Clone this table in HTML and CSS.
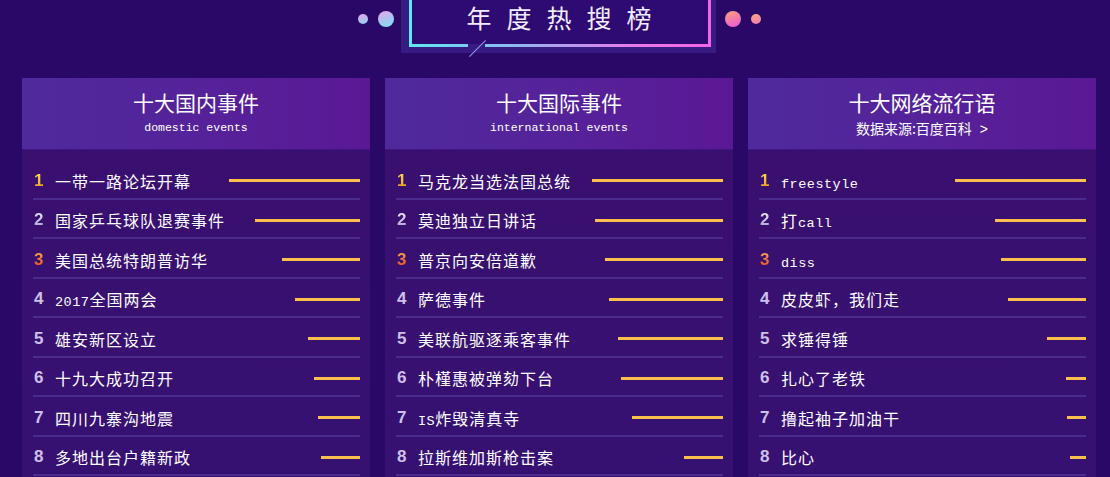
FILE: index.html
```html
<!DOCTYPE html>
<html lang="zh-CN">
<head>
  <meta charset="UTF-8" />
  <meta name="viewport" content="width=device-width, initial-scale=1.0" />
  <title>年度热搜榜</title>
  <link rel="stylesheet" href="styles.css">
</head>
<body>

  <div class="top">
    <div class="dots">
      <span class="dot small cool-small"></span>
      <span class="dot big cool"></span>
    </div>
    <div class="title-frame">
      <div class="title-border">
        <h1 class="title">年度热搜榜</h1>
      </div>
      <span class="notch"></span>
      <span class="notch-line"></span>
    </div>
    <div class="dots">
      <span class="dot big warm"></span>
      <span class="dot small warm-small"></span>
    </div>
  </div>

  <div class="boards">
    <div class="board">
      <div class="board-head">
        <h2>十大国内事件</h2>
        <p class="sub en-sub">domestic events</p>
      </div>
      <ul class="rank-list">
        <li><span class="no no1">1</span><span class="name">一带一路论坛开幕</span><span class="bar" style="width:131px"></span></li>
        <li><span class="no no2">2</span><span class="name">国家乒乓球队退赛事件</span><span class="bar" style="width:105px"></span></li>
        <li><span class="no no3">3</span><span class="name">美国总统特朗普访华</span><span class="bar" style="width:78px"></span></li>
        <li><span class="no">4</span><span class="name"><span class="en">2017</span>全国两会</span><span class="bar" style="width:65px"></span></li>
        <li><span class="no">5</span><span class="name">雄安新区设立</span><span class="bar" style="width:52px"></span></li>
        <li><span class="no">6</span><span class="name">十九大成功召开</span><span class="bar" style="width:46px"></span></li>
        <li><span class="no">7</span><span class="name">四川九寨沟地震</span><span class="bar" style="width:42px"></span></li>
        <li><span class="no">8</span><span class="name">多地出台户籍新政</span><span class="bar" style="width:39px"></span></li>
      </ul>
    </div>

    <div class="board">
      <div class="board-head">
        <h2>十大国际事件</h2>
        <p class="sub en-sub">international events</p>
      </div>
      <ul class="rank-list">
        <li><span class="no no1">1</span><span class="name">马克龙当选法国总统</span><span class="bar" style="width:131px"></span></li>
        <li><span class="no no2">2</span><span class="name">莫迪独立日讲话</span><span class="bar" style="width:128px"></span></li>
        <li><span class="no no3">3</span><span class="name">普京向安倍道歉</span><span class="bar" style="width:118px"></span></li>
        <li><span class="no">4</span><span class="name">萨德事件</span><span class="bar" style="width:114px"></span></li>
        <li><span class="no">5</span><span class="name">美联航驱逐乘客事件</span><span class="bar" style="width:105px"></span></li>
        <li><span class="no">6</span><span class="name">朴槿惠被弹劾下台</span><span class="bar" style="width:102px"></span></li>
        <li><span class="no">7</span><span class="name"><span class="en">IS</span>炸毁清真寺</span><span class="bar" style="width:91px"></span></li>
        <li><span class="no">8</span><span class="name">拉斯维加斯枪击案</span><span class="bar" style="width:39px"></span></li>
      </ul>
    </div>

    <div class="board">
      <div class="board-head">
        <h2>十大网络流行语</h2>
        <p class="sub">数据来源:百度百科<span class="more">&gt;</span></p>
      </div>
      <ul class="rank-list">
        <li><span class="no no1">1</span><span class="name"><span class="en">freestyle</span></span><span class="bar" style="width:131px"></span></li>
        <li><span class="no no2">2</span><span class="name">打<span class="en">call</span></span><span class="bar" style="width:91px"></span></li>
        <li><span class="no no3">3</span><span class="name"><span class="en">diss</span></span><span class="bar" style="width:85px"></span></li>
        <li><span class="no">4</span><span class="name">皮皮虾，我们走</span><span class="bar" style="width:78px"></span></li>
        <li><span class="no">5</span><span class="name">求锤得锤</span><span class="bar" style="width:39px"></span></li>
        <li><span class="no">6</span><span class="name">扎心了老铁</span><span class="bar" style="width:20px"></span></li>
        <li><span class="no">7</span><span class="name">撸起袖子加油干</span><span class="bar" style="width:19px"></span></li>
        <li><span class="no">8</span><span class="name">比心</span><span class="bar" style="width:16px"></span></li>
      </ul>
    </div>
  </div>

</body>
</html>
```

FILE: styles.css
```css
body {
  margin: 0;
  background: #2a0868;
  font-family: "Noto Sans CJK SC", "Noto Sans", sans-serif;
  color: #fff;
  overflow: hidden;
}

/* title area */

.top {
  height: 78px;
  display: flex;
  justify-content: center;
  align-items: flex-start;
  padding-left: 9px;
}

.dots {
  display: flex;
  align-items: center;
  gap: 10px;
  margin-top: 11px;
  height: 16px;
}

.dots:first-child {
  margin-right: 7px;
}

.dots:last-child {
  margin-left: 9px;
}

.dot {
  display: block;
  border-radius: 50%;
}

.dot.small {
  width: 10px;
  height: 10px;
}

.dot.big {
  width: 16px;
  height: 16px;
}

.cool-small {
  background: linear-gradient(160deg, #e7a0ec, #8fd4f2);
}

.cool {
  background: linear-gradient(160deg, #f0a4e6 0%, #a6c6f0 55%, #7de6f0 100%);
}

.warm {
  background: linear-gradient(160deg, #f7a578 0%, #f272b6 60%, #e85ad8 100%);
}

.warm-small {
  background: linear-gradient(160deg, #f9a882, #f27ab8);
}

.title-frame {
  position: relative;
  margin-top: -10px;
  padding: 0 5px 6px 8px;
  background: #371a82;
}

.title-border {
  width: 296px;
  padding: 0 3px 3px 3px;
  background: linear-gradient(90deg, #5ee8f2 0%, #8fb8f0 35%, #e87ae8 75%, #f463e6 100%);
}

.title {
  margin: 0;
  height: 54px;
  line-height: 54px;
  background: #2d0b73;
  text-align: center;
  font-size: 25px;
  font-weight: normal;
  letter-spacing: 15px;
  padding-left: 13px;
  color: #f2ecff;
}

.notch {
  position: absolute;
  left: 67px;
  top: 54px;
  width: 17px;
  height: 3px;
  background: #371a82;
}

.notch-line {
  position: absolute;
  left: 65px;
  top: 58px;
  width: 23px;
  height: 1px;
  background: #8a98e0;
  transform: rotate(-45deg);
}

/* boards */

.boards {
  display: flex;
  gap: 15px;
  padding-left: 22px;
}

.board {
  width: 348px;
  background: linear-gradient(180deg, #3a0f6e 0%, #361172 100%);
}

.board-head {
  box-sizing: border-box;
  height: 72px;
  padding-top: 11px;
  text-align: center;
  background: linear-gradient(90deg, #4f2a9c 0%, #55229a 50%, #5b1895 100%);
  border-bottom: 1px solid #3f1682;
}

.board-head h2 {
  margin: 0;
  font-size: 21px;
  line-height: 26px;
  font-weight: normal;
}

.sub {
  margin: 5px 0 0;
  font-size: 14px;
  line-height: 16px;
}

.en-sub {
  font-family: "Liberation Mono", monospace;
  font-size: 11.5px;
}

.more {
  font-family: "Liberation Sans", sans-serif;
  margin-left: 8px;
}

.rank-list {
  list-style: none;
  margin: 0;
  padding: 10px 10px 12px 11px;
}

.rank-list li {
  box-sizing: border-box;
  height: 39.5px;
  padding-top: 4px;
  display: flex;
  align-items: center;
  border-bottom: 2px solid #4b2b8c;
}

.no {
  width: 21px;
  padding-left: 1px;
  font-family: "Liberation Sans", Arial, sans-serif;
  font-weight: bold;
  font-size: 17px;
  color: #cdc1ea;
}

.no1, .no2, .no3 {
  -webkit-background-clip: text;
  background-clip: text;
  color: transparent;
}

.no1 {
  background-image: linear-gradient(180deg, #ffe15a 0%, #f5b22a 60%, #e88a18 100%);
}

.no2 {
  background-image: linear-gradient(180deg, #f2f0fc 0%, #c4bce0 60%, #9a90c4 100%);
}

.no3 {
  background-image: linear-gradient(180deg, #ffb060 0%, #f46a2a 60%, #d8401c 100%);
}

.name {
  font-size: 16px;
  letter-spacing: 1px;
  white-space: nowrap;
}

.en {
  font-family: "Liberation Mono", monospace;
  font-size: 13.5px;
  letter-spacing: 0.5px;
}

.bar {
  margin-left: auto;
  height: 3px;
  background: #fcbf4b;
}
```
